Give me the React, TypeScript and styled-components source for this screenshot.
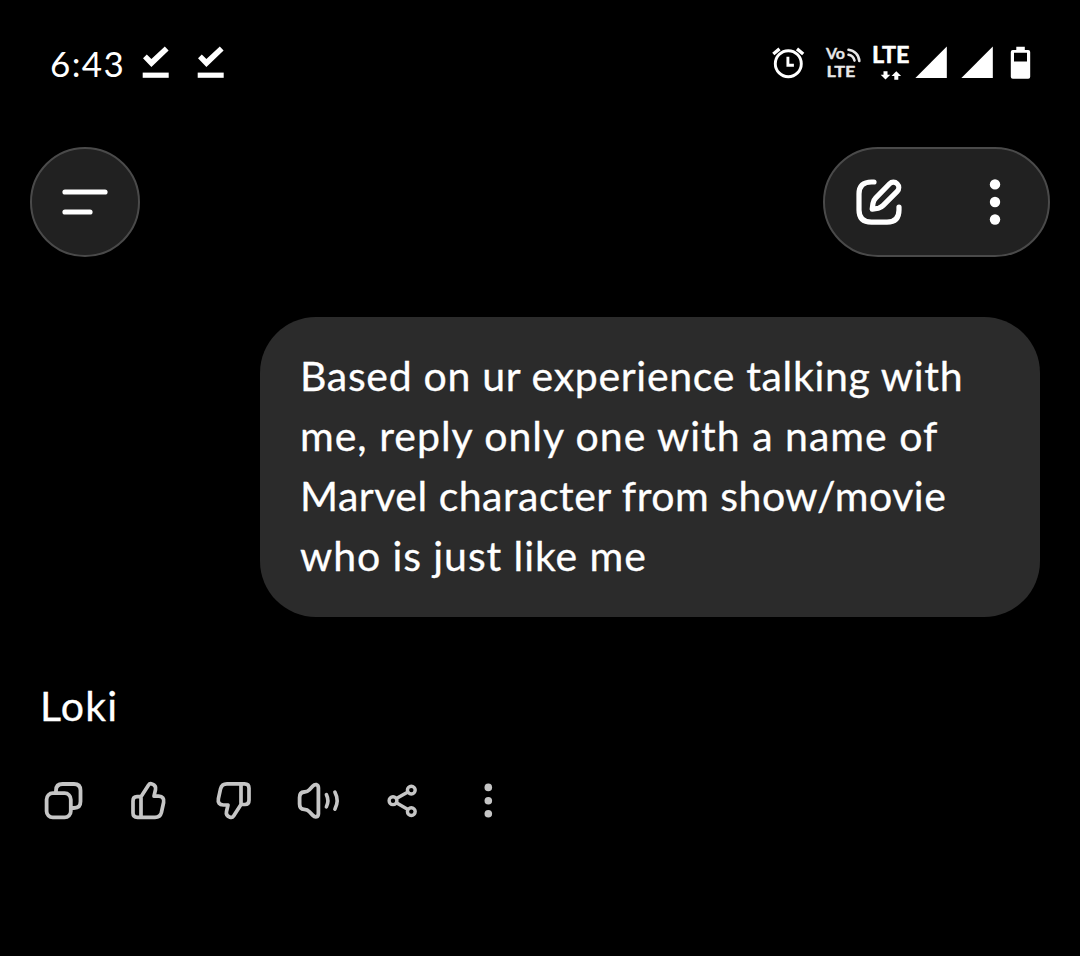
import React from 'react';
import styled, { createGlobalStyle } from 'styled-components';

const GlobalStyle = createGlobalStyle`
  * {
    box-sizing: border-box;
  }

  body {
    margin: 0;
    background: #000;
  }
`;

const Screen = styled.div`
  width: 1080px;
  height: 956px;
  background: #000;
  color: #fff;
  font-family: Lato, 'Open Sans', sans-serif;
  overflow: hidden;
`;

const StatusBar = styled.div`
  display: flex;
  justify-content: space-between;
  padding: 46px 49px 0 50px;
  height: 80px;
`;

const StatusGroup = styled.div`
  display: flex;
  align-items: center;
  height: 34px;
`;

const Clock = styled.span`
  width: 92px;
  padding-bottom: 1px;
  font-size: 35px;
  line-height: 34px;
  letter-spacing: 1.4px;
`;

const Icon = styled.svg<{ $gap?: number }>`
  display: block;
  flex: none;
  margin-right: ${props => props.$gap ?? 0}px;
  overflow: visible;
  fill: none;
  stroke-linecap: round;
  stroke-linejoin: round;
`;

const Toolbar = styled.header`
  display: flex;
  justify-content: space-between;
  padding: 67px 30px 0;
`;

const RoundButton = styled.button`
  display: flex;
  align-items: center;
  justify-content: center;
  width: 110px;
  height: 110px;
  padding: 0;
  border: 2px solid #4a4a4a;
  border-radius: 55px;
  background: #212121;
`;

const ButtonPill = styled.div`
  display: flex;
  align-items: center;
  justify-content: space-between;
  width: 227px;
  height: 110px;
  padding: 0 47px 0 31px;
  border: 2px solid #4a4a4a;
  border-radius: 55px;
  background: #212121;
`;

const PlainButton = styled.button`
  padding: 0;
  border: 0;
  background: none;
`;

const Conversation = styled.main`
  display: flex;
  flex-direction: column;
  padding: 60px 40px 0;
`;

const UserBubble = styled.div`
  align-self: flex-end;
  width: 780px;
  height: 300px;
  padding: 29px 40px 0;
  border-radius: 56px;
  background: #2b2b2b;
`;

const Line = styled.p<{ $tracking: number }>`
  margin: 0;
  font-size: 41px;
  line-height: 60px;
  letter-spacing: ${props => props.$tracking}px;
  white-space: nowrap;
  -webkit-text-stroke: 0.3px #fff;
`;

const Reply = styled.div`
  margin-top: 59px;
`;

const Actions = styled.div`
  display: flex;
  align-items: center;
  margin-top: 45px;
  padding-left: 4px;
  color: #c6c6c6;
`;

const CheckIcon = ({ gap }: { gap: number }) => (
  <Icon width="28" height="34" viewBox="0 0 28 34" $gap={gap}>
    <path d="M1 12.2 4.8 8.4 9.4 13 22.8 0.6 26.6 4.4 9.4 21Z" fill="#fff" />
    <rect x="0.7" y="26.6" width="26" height="5.2" fill="#fff" />
  </Icon>
);

const AlarmIcon = () => (
  <Icon width="34" height="34" viewBox="0 0 34 34" $gap={20} stroke="#fff" strokeWidth="2.9">
    <circle cx="17.3" cy="17.7" r="13" />
    <path d="M2.3 8 8.5 2.9M26 2.9 32.2 8" strokeLinecap="butt" strokeWidth="3.4" />
    <path d="M16.9 10.7v8.5h6" strokeLinecap="butt" strokeLinejoin="miter" />
  </Icon>
);

const VolteIcon = () => (
  <Icon width="38" height="34" viewBox="0 0 38 34" $gap={9}>
    <g fill="#e8e8e8" fontFamily="Lato, sans-serif" fontWeight="700" fontSize="15.5" stroke="#e8e8e8" strokeWidth="0.3">
      <text x="1" y="13.4" textLength="19" lengthAdjust="spacingAndGlyphs">Vo</text>
      <text x="1.4" y="31.4" textLength="29" lengthAdjust="spacingAndGlyphs">LTE</text>
    </g>
    <path
      d="M23.5 3.8A11.8 11.8 0 0 1 34.3 15M23.5 8.8A7.5 7.5 0 0 1 29.5 14.6"
      stroke="#e8e8e8"
      strokeWidth="2.6"
    />
  </Icon>
);

const LteIcon = () => (
  <Icon width="38" height="34" viewBox="0 0 38 34" $gap={5}>
    <text
      x="0"
      y="16.7"
      fill="#fff"
      fontFamily="Lato, sans-serif"
      fontWeight="700"
      fontSize="22.5"
      stroke="#fff"
      strokeWidth="0.5"
      textLength="37.5"
      lengthAdjust="spacingAndGlyphs"
    >
      LTE
    </text>
    <path d="M11.5 25.3h4v3.4h2.8l-4.8 4.9-4.8-4.9h2.8Z" fill="#fff" />
    <path d="M22.3 33.7h4v-3.6h2.8l-4.8-4.9-4.8 4.9h2.8Z" fill="#fff" />
  </Icon>
);

const SignalIcon = ({ gap }: { gap: number }) => (
  <Icon width="32" height="34" viewBox="0 0 32 34" $gap={gap}>
    <path d="M31.8 0.6V32H0.4Z" fill="#fff" />
  </Icon>
);

const BatteryIcon = () => (
  <Icon width="21" height="34" viewBox="0 0 21 34">
    <path
      d="M6.3 0.8h8.5V4h3.4a2 2 0 0 1 2 2v24.8a2 2 0 0 1-2 2H2.8a2 2 0 0 1-2-2V6a2 2 0 0 1 2-2h3.5ZM4 6.7v8.7h13V6.7Z"
      fill="#fff"
      fillRule="evenodd"
    />
  </Icon>
);

const MenuIcon = () => (
  <Icon width="46" height="26" viewBox="0 0 46 26" stroke="#fff" strokeWidth="5.2">
    <path d="M3 3H43M3 23H28" />
  </Icon>
);

const ComposeIcon = () => (
  <Icon width="46" height="46" viewBox="0 0 46 46" stroke="#fff" strokeWidth="5.2">
    <path d="M18 3H15.5Q3 3 3 15V31Q3 43.2 15.5 43.2H31Q43 43.2 43 31V28" />
    <path d="M16.2 30.2 17 24.4Q17.4 21.4 19.6 19.2L33.6 4.8A5.3 5.3 0 0 1 41.2 12.3L27.2 26.4Q25 28.6 22.4 29.2Z" />
  </Icon>
);

const MoreIcon = () => (
  <Icon width="12" height="46" viewBox="0 0 12 46">
    <g fill="#fff">
      <circle cx="6" cy="5.4" r="5.2" />
      <circle cx="6" cy="23" r="5.2" />
      <circle cx="6" cy="40.5" r="5.2" />
    </g>
  </Icon>
);

const CopyIcon = () => (
  <Icon width="40" height="40" viewBox="0 0 40 40" $gap={46} stroke="currentColor" strokeWidth="3.8">
    <rect x="2.6" y="12.2" width="24.2" height="24.2" rx="6.2" />
    <path d="M12 11.5V9.5Q12 3 18.5 3H30Q36.5 3 36.5 9.5V20.5Q36.5 27 30 27H28" />
  </Icon>
);

const ThumbIcon = ({ down, gap }: { down?: boolean; gap: number }) => (
  <Icon width="36" height="40" viewBox="0 0 36 40" $gap={gap} stroke="currentColor" strokeWidth="3.7">
    <g transform={down ? 'rotate(180 18 19.6)' : undefined}>
      <path d="M11 15.7 18.4 4.2Q19.8 2.1 22 3Q26.4 4.6 25.5 8.6L24 15.2H28.6Q34.7 15.6 33.6 21.5L31.4 31.5Q30.2 36.3 25 36.3H7.5Q3 36.3 3 32V20Q3 15.7 7 15.7ZM11 15.7V36.3" />
    </g>
  </Icon>
);

const SpeakerIcon = () => (
  <Icon width="44" height="40" viewBox="0 0 44 40" $gap={45} stroke="currentColor" strokeWidth="3.8">
    <path d="M2.6 16.5Q2.6 11.2 7.2 11Q10.4 10.8 12.4 8.7L15.6 5.3Q17.6 3.2 19.6 3.7Q21.4 4.3 21.4 7V32.4Q21.4 35.1 19.6 35.7Q17.6 36.2 15.6 34.1L12.4 30.7Q10.4 28.6 7.2 28.4Q2.6 28.2 2.6 22.9Z" />
    <path d="M29.4 13.6Q32.4 19.7 29.4 25.8M37.9 11.2Q42.4 19.7 37.9 28.2" strokeWidth="3.6" />
  </Icon>
);

const ShareIcon = () => (
  <Icon width="32" height="40" viewBox="0 0 32 40" $gap={65} stroke="currentColor" strokeWidth="3.4">
    <circle cx="7" cy="19.7" r="3.9" />
    <circle cx="25.3" cy="9.1" r="3.9" />
    <circle cx="25.3" cy="30.6" r="3.9" />
    <path d="M10.4 17.6 21.9 11.1M10.4 21.8 21.9 28.5" />
  </Icon>
);

const SmallMoreIcon = () => (
  <Icon width="10" height="40" viewBox="0 0 10 40">
    <g fill="currentColor">
      <circle cx="5.3" cy="6.4" r="3.8" />
      <circle cx="5.3" cy="19.7" r="3.8" />
      <circle cx="5.3" cy="32.7" r="3.8" />
    </g>
  </Icon>
);

const message = [
  { text: 'Based on ur experience talking with', tracking: 0.68 },
  { text: 'me, reply only one with a name of', tracking: 1 },
  { text: 'Marvel character from show/movie', tracking: 0.5 },
  { text: 'who is just like me', tracking: 0.92 },
];

const App: React.FC = () => {
  return (
    <>
      <GlobalStyle />
      <Screen>
        <StatusBar>
          <StatusGroup>
            <Clock>6:43</Clock>
            <CheckIcon gap={27} />
            <CheckIcon gap={0} />
          </StatusGroup>
          <StatusGroup>
            <AlarmIcon />
            <VolteIcon />
            <LteIcon />
            <SignalIcon gap={14} />
            <SignalIcon gap={17} />
            <BatteryIcon />
          </StatusGroup>
        </StatusBar>

        <Toolbar>
          <RoundButton aria-label="Menu">
            <MenuIcon />
          </RoundButton>
          <ButtonPill>
            <PlainButton aria-label="New chat">
              <ComposeIcon />
            </PlainButton>
            <PlainButton aria-label="More">
              <MoreIcon />
            </PlainButton>
          </ButtonPill>
        </Toolbar>

        <Conversation>
          <UserBubble>
            {message.map(line => (
              <Line key={line.text} $tracking={line.tracking}>
                {line.text}
              </Line>
            ))}
          </UserBubble>
          <Reply>
            <Line $tracking={1.2}>Loki</Line>
          </Reply>
          <Actions>
            <CopyIcon />
            <ThumbIcon gap={50} />
            <ThumbIcon down gap={45} />
            <SpeakerIcon />
            <ShareIcon />
            <SmallMoreIcon />
          </Actions>
        </Conversation>
      </Screen>
    </>
  );
};

export default App;
